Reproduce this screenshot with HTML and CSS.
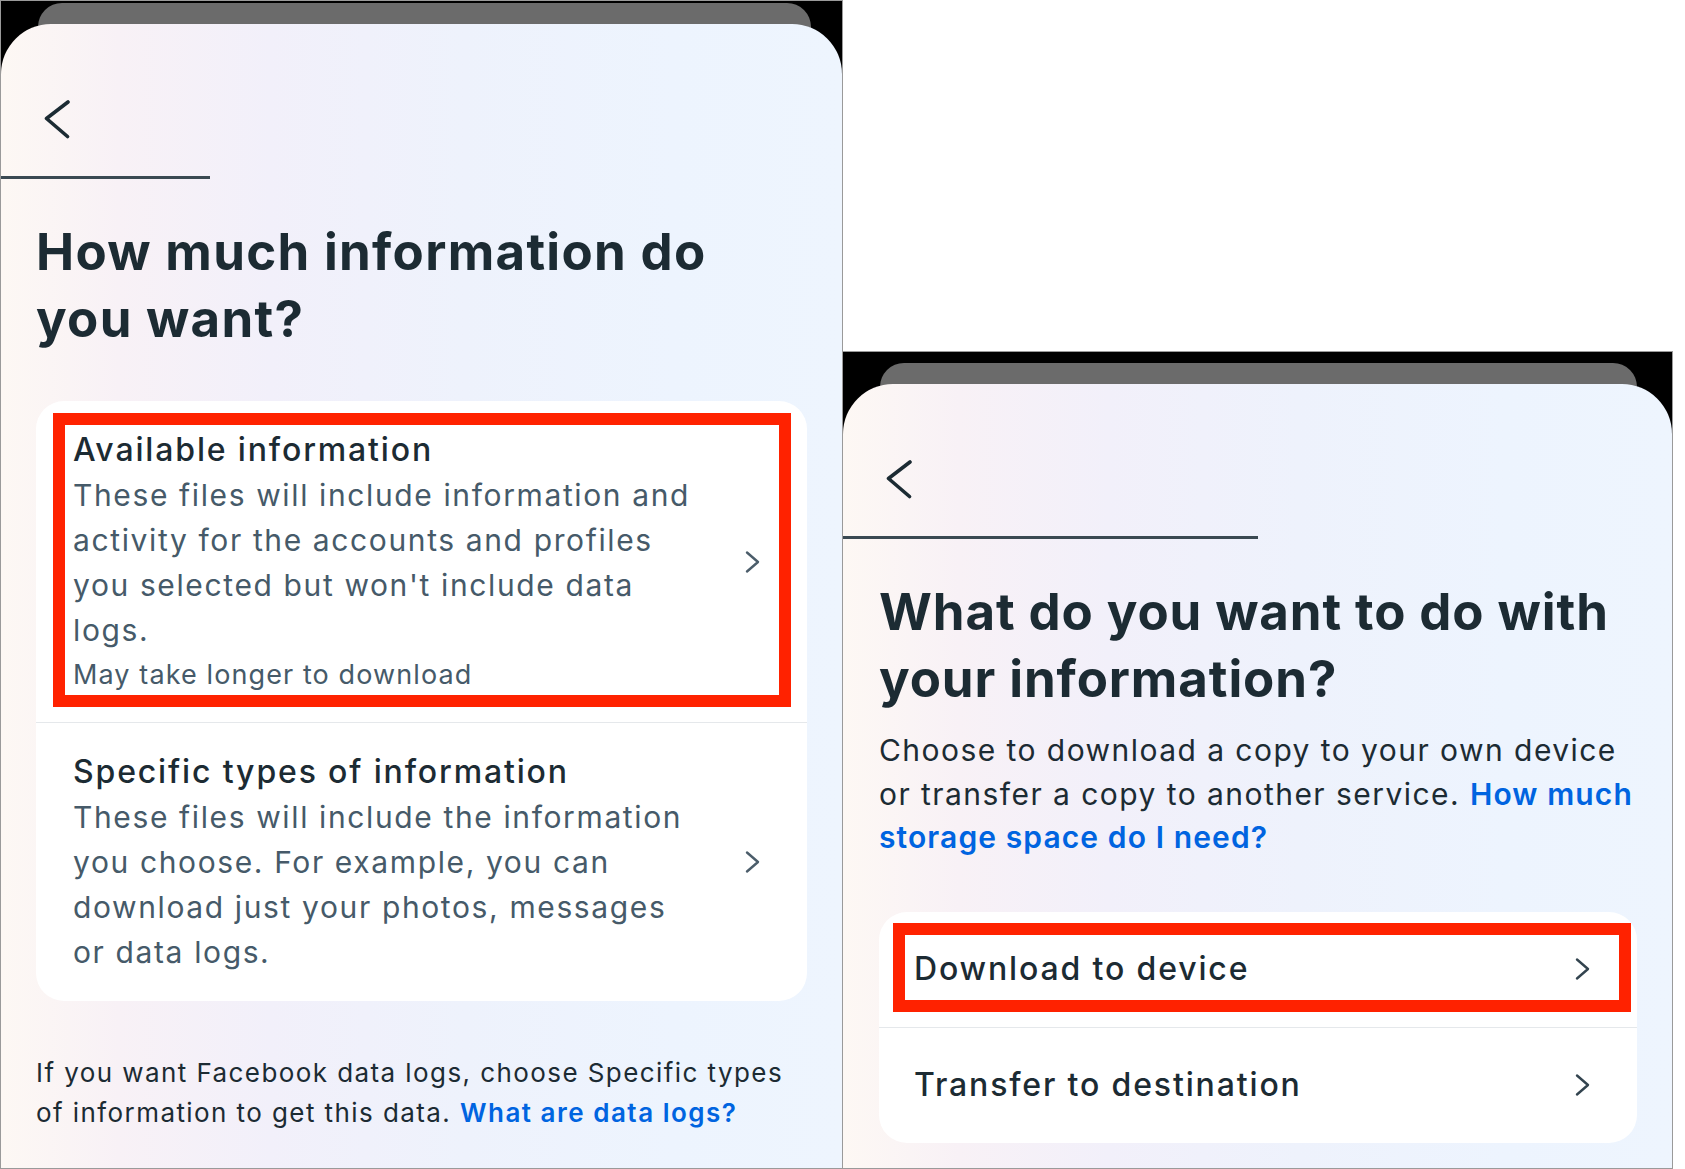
FILE: index.html
```html
<!DOCTYPE html>
<html lang="en">
<head>
<meta charset="utf-8">
<title>Download your information</title>
<link rel="stylesheet" href="styles.css">
</head>
<body>
<div class="stage">
  <section class="shot shot--left">
    <div class="band band--left"><div class="sheet"></div></div>
    <div class="panel">
      <div class="nav">
        <svg class="back" viewBox="0 0 28 40" width="28" height="40" aria-hidden="true"><path d="M25 3 L3.5 19.5 L24.5 37.5"/></svg>
      </div>
      <div class="rule rule--left"></div>
      <div class="content content--left">
        <h1 class="heading heading--left">How much information do you want?</h1>
        <div class="card">
          <div class="row row--marked mark-left">
            <div class="row__text">
              <div class="row__title">Available information</div>
              <div class="row__body">These files will include information and activity for the accounts and profiles you selected but won't include data logs.</div>
              <div class="row__note">May take longer to download</div>
            </div>
            <svg class="chev" viewBox="0 0 17 24" width="17" height="24" aria-hidden="true"><path d="M3 2.5 L14 12 L3 21.5"/></svg>
          </div>
          <div class="row">
            <div class="row__text">
              <div class="row__title">Specific types of information</div>
              <div class="row__body">These files will include the information you choose. For example, you can download just your photos, messages or data logs.</div>
            </div>
            <svg class="chev" viewBox="0 0 17 24" width="17" height="24" aria-hidden="true"><path d="M3 2.5 L14 12 L3 21.5"/></svg>
          </div>
        </div>
        <p class="foot">If you want Facebook data logs, choose Specific types of information to get this data. <a class="link link--foot" href="#">What are data logs?</a></p>
      </div>
    </div>
  </section>

  <section class="shot shot--right">
    <div class="band band--right"><div class="sheet"></div></div>
    <div class="panel">
      <div class="nav">
        <svg class="back" viewBox="0 0 28 40" width="28" height="40" aria-hidden="true"><path d="M25 3 L3.5 19.5 L24.5 37.5"/></svg>
      </div>
      <div class="rule rule--right"></div>
      <div class="content content--right">
        <h1 class="heading">What do you want to do with your information?</h1>
        <p class="lead">Choose to download a copy to your own device or transfer a copy to another service. <a class="link" href="#">How much storage space do I need?</a></p>
        <div class="card card--menu">
          <div class="row row--single row--marked mark-right">
            <div class="row__text"><div class="row__title">Download to device</div></div>
            <svg class="chev chev--dark" viewBox="0 0 17 24" width="17" height="24" aria-hidden="true"><path d="M3 2.5 L14 12 L3 21.5"/></svg>
          </div>
          <div class="row row--single">
            <div class="row__text"><div class="row__title">Transfer to destination</div></div>
            <svg class="chev chev--dark" viewBox="0 0 17 24" width="17" height="24" aria-hidden="true"><path d="M3 2.5 L14 12 L3 21.5"/></svg>
          </div>
        </div>
      </div>
    </div>
  </section>
</div>
</body>
</html>
```

FILE: styles.css
```css
* { box-sizing: border-box; }

html, body {
  margin: 0;
  padding: 0;
}

body {
  width: 1685px;
  height: 1169px;
  overflow: hidden;
  background: #ffffff;
  font-family: Inter, "Noto Sans", sans-serif;
  color: #1c2b33;
}

.stage {
  display: flex;
  align-items: flex-start;
}

.shot {
  display: flex;
  flex-direction: column;
  background: #000;
  border: 1px solid #9a9a9a;
  overflow: hidden;
}

.shot--left {
  width: 843px;
  height: 1169px;
}

.shot--right {
  width: 830px;
  height: 818px;
  margin-top: 351px;
  border-left: 0;
}

.band {
  flex: none;
  height: 23px;
}

.band--left { padding: 2px 31px 0 37px; }
.band--right { height: 32px; padding: 11px 35px 0 37px; }

.sheet {
  height: 70px;
  background: #6b6b6b;
  border-radius: 24px 24px 0 0;
}

.panel {
  position: relative;
  flex: 1;
  border-radius: 50px 50px 0 0;
  background: linear-gradient(90deg, #fdf8f4 0%, #f8f1f6 14%, #f2f0fa 32%, #eef2fc 55%, #edf4fe 80%, #eef5fe 100%);
}

.nav {
  height: 152px;
  padding: 75px 0 0 42px;
}

.back {
  display: block;
  fill: none;
  stroke: #1c2b33;
  stroke-width: 3.6;
  stroke-linecap: round;
  stroke-linejoin: round;
}

.rule {
  height: 3px;
  background: #3a4952;
}

.rule--left { width: 209px; }
.rule--right { width: 415px; }

.content--left { padding: 0 35px; }
.content--right { padding: 0 35px 0 36px; }

.heading {
  margin: 39px 0 0;
  font-size: 51px;
  line-height: 67px;
  font-weight: 700;
  letter-spacing: 0.9px;
  color: #1c2b33;
}

.heading--left { max-width: 740px; letter-spacing: 1.3px; }

.card {
  margin-top: 49px;
  background: #ffffff;
  border-radius: 28px;
}

.row {
  position: relative;
  display: flex;
  align-items: center;
  gap: 40px;
  padding: 26px 46px 26px 37px;
}

.row + .row { border-top: 1px solid #e5e8eb; }

.row__text { flex: 1; }

.row__title {
  font-size: 32px;
  line-height: 46px;
  font-weight: 500;
  letter-spacing: 1.85px;
  color: #1c2b33;
}

.row__body {
  font-size: 30px;
  line-height: 45px;
  letter-spacing: 1.62px;
  color: #465a69;
}

.row__note {
  font-size: 27px;
  line-height: 43px;
  letter-spacing: 1.1px;
  color: #465a69;
}

.chev {
  flex: none;
  display: block;
  fill: none;
  stroke: #4b5d6a;
  stroke-width: 2.4;
  stroke-linecap: round;
  stroke-linejoin: round;
}

.chev--dark { stroke: #33444f; }

.row--marked::after {
  content: "";
  position: absolute;
  border: 12px solid #ff2200;
  pointer-events: none;
}

.mark-left::after { left: 17px; top: 12px; right: 16px; bottom: 15px; }
.mark-right::after { left: 14px; top: 11px; right: 6px; bottom: 15px; }

.row--single { padding: 34px 46px 35px 35px; }

.foot {
  margin: 52px 0 0;
  padding-right: 12px;
  font-size: 26px;
  line-height: 40px;
  letter-spacing: 1.42px;
  color: #1c2b33;
}

.lead {
  margin: 17px -20px 0 0;
  font-size: 30px;
  line-height: 43.5px;
  letter-spacing: 1.45px;
  color: #1c2b33;
}

.card--menu { margin-top: 52px; }

.link {
  color: #0064e0;
  font-weight: 600;
  text-decoration: none;
  letter-spacing: 1.1px;
}

.link--foot { letter-spacing: 1.5px; }
```
